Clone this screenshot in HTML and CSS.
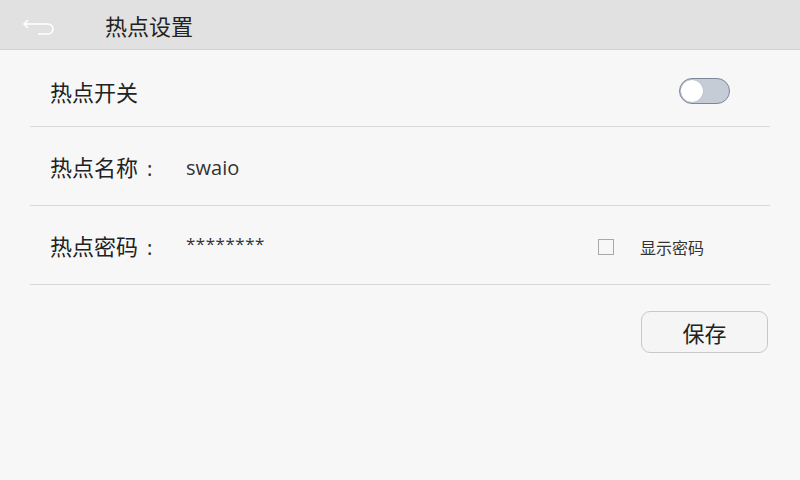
FILE: index.html
```html
<!DOCTYPE html>
<html lang="zh-CN">
<head>
<meta charset="utf-8">
<title>热点设置</title>
<link rel="stylesheet" href="styles.css">
</head>
<body>
<header class="topbar">
  <button class="back" aria-label="返回">
    <svg width="34" height="20" viewBox="0 0 34 20">
      <path d="M2 6 H26 A5 5 0 0 1 26 16 H16" fill="none" stroke="#fff" stroke-width="1.6"/>
      <path d="M6 2 L2 6 L6 10" fill="none" stroke="#fff" stroke-width="1.6"/>
    </svg>
  </button>
  <h1 class="title">热点设置</h1>
</header>
<main class="content">
  <div class="row">
    <span class="label">热点开关</span>
    <span class="toggle"><span class="knob"></span></span>
  </div>
  <div class="row">
    <span class="label">热点名称<span class="colon">:</span></span>
    <span class="value">swaio</span>
  </div>
  <div class="row">
    <span class="label">热点密码<span class="colon">:</span></span>
    <span class="value pwd">********</span>
    <label class="show">
      <span class="checkbox"></span>
      <span class="show-text">显示密码</span>
    </label>
  </div>
  <div class="actions">
    <button class="save">保存</button>
  </div>
</main>
</body>
</html>
```
FILE: styles.css
```css
html, body {
  margin: 0;
  padding: 0;
  width: 800px;
  height: 480px;
  overflow: hidden;
  background: #f7f7f7;
  font-family: "Noto Sans CJK SC", "Noto Sans", sans-serif;
  color: #222;
}
.topbar {
  height: 49px;
  background: #e1e1e1;
  border-bottom: 1px solid #d2d2d2;
  display: flex;
  align-items: center;
}
.back {
  border: 0;
  background: none;
  padding: 0;
  margin: 7px 0 0 22px;
  width: 34px;
  height: 20px;
  display: flex;
}
.title {
  margin: 0 0 0 49px;
  font-size: 22px;
  font-weight: 400;
  color: #222;
  line-height: 1;
}
.content {
  padding: 0 30px;
}
.row {
  border-bottom: 1px solid #d9d9d9;
  display: flex;
  align-items: center;
  padding: 2px 20px 0;
  box-sizing: border-box;
  height: 79px;
  font-size: 22px;
}
.row:first-child { height: 77px; padding-top: 6px; }
.label {
  width: 136px;
  flex: none;
  line-height: 1;
  white-space: nowrap;
}
.colon {
  font-family: "Noto Sans", sans-serif;
  font-size: 20px;
  margin-left: 9px;
  color: #333;
}
.value {
  font-family: "Open Sans", "Noto Sans", sans-serif;
  font-size: 20px;
  color: #333;
}
.pwd {
  font-size: 17px;
  letter-spacing: 0.5px;
  position: relative;
  top: -3px;
}
.toggle {
  margin-left: auto;
  width: 47px;
  height: 24px;
  border: 1.5px solid #7c8799;
  border-radius: 14px;
  background: #c6ccd6;
  display: flex;
  align-items: center;
  padding: 0 1px;
  margin-right: 20px;
}
.knob {
  width: 22px;
  height: 22px;
  border-radius: 50%;
  background: #fff;
  box-shadow: 0 0 1px rgba(0,0,0,0.3);
}
.show {
  margin-left: auto;
  display: flex;
  align-items: center;
  margin-right: 46px;
  padding-top: 1px;
}
.checkbox {
  border: 1px solid #a8a8a8;
  background: #f7f7f7;
  box-sizing: border-box;
  width: 16px;
  height: 16px;
}
.show-text {
  margin-left: 26px;
  font-size: 16px;
  color: #333;
}
.actions {
  display: flex;
  justify-content: flex-end;
  padding-top: 26px;
  padding-right: 2px;
}
.save {
  width: 127px;
  height: 42px;
  border: 1px solid #c8c8c8;
  border-radius: 9px;
  background: #f5f5f5;
  font-family: "Noto Sans CJK SC", sans-serif;
  font-size: 22px;
  color: #222;
  padding: 0;
}
```
